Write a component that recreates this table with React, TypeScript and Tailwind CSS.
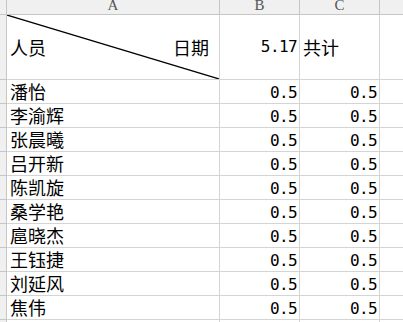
// Spreadsheet: attendance sheet with a diagonal header cell

const names = ["潘怡", "李渝辉", "张晨曦", "吕开新", "陈凯旋", "桑学艳", "扈晓杰", "王钰捷", "刘延风", "焦伟"];

const cjk = { fontFamily: '"Noto Sans CJK SC", sans-serif' };
const mono = { fontFamily: '"DejaVu Sans Mono", monospace' };

export default function App() {
  return (
    <div className="w-[403px] h-[322px] overflow-hidden bg-white text-black">
      {/* Column headers */}
      <div className="flex h-[15px]">
        <div className="w-[7px] shrink-0 bg-[#f0f0f0] border-r border-b border-[#c6c6c6]" />
        <ColHead label="A" width="w-[213px]" />
        <ColHead label="B" width="w-[80px]" />
        <ColHead label="C" width="w-[80px]" />
        <div className="flex-1 bg-[#f0f0f0] border-b border-[#c6c6c6]" />
      </div>

      {/* Title row */}
      <div className="flex h-[65px]">
        <RowHead />
        <div
          className="relative w-[213px] shrink-0 border-r border-b border-[#d4d4d4] flex items-center justify-between pl-[3px] pr-[10px] text-[18px] pt-[1px]"
          style={cjk}
        >
          <svg className="absolute inset-0" width="212" height="64" viewBox="0 0 212 64">
            <line x1="0" y1="0" x2="212" y2="64" stroke="#000" strokeWidth="1.2" />
          </svg>
          <span>人员</span>
          <span>日期</span>
        </div>
        <div
          className="w-[80px] shrink-0 border-r border-b border-[#d4d4d4] flex items-center justify-end pr-[2px] text-[16px] tracking-[-0.6px]"
          style={mono}
        >
          5.17
        </div>
        <div
          className="w-[80px] shrink-0 border-r border-b border-[#d4d4d4] flex items-center pl-[3px] text-[18px] pt-[1px]"
          style={cjk}
        >
          共计
        </div>
        <div className="flex-1 border-b border-[#d4d4d4]" />
      </div>

      {/* Data rows */}
      {names.map((name) => (
        <div key={name} className="flex h-[24px]">
          <RowHead />
          <div
            className="w-[213px] shrink-0 border-r border-b border-[#d4d4d4] flex items-end pl-[3px] text-[18px] leading-[23px]"
            style={cjk}
          >
            {name}
          </div>
          <NumCell value="0.5" />
          <NumCell value="0.5" />
          <div className="flex-1 border-b border-[#d4d4d4]" />
        </div>
      ))}

      <div className="flex h-[10px]">
        <div className="w-[7px] shrink-0 bg-[#f0f0f0] border-r border-[#c6c6c6]" />
        <div className="w-[213px] shrink-0 border-r border-[#d4d4d4]" />
        <div className="w-[80px] shrink-0 border-r border-[#d4d4d4]" />
        <div className="w-[80px] shrink-0 border-r border-[#d4d4d4]" />
      </div>
    </div>
  );
}

function ColHead({ label, width }: { label: string; width: string }) {
  return (
    <div
      className={`${width} shrink-0 bg-[#f0f0f0] border-r border-b border-[#c6c6c6] flex items-start justify-center overflow-hidden text-[15px] leading-[11px] text-[#555]`}
      style={{ fontFamily: '"Liberation Serif", serif' }}
    >
      {label}
    </div>
  );
}

function RowHead() {
  return <div className="w-[7px] shrink-0 bg-[#f0f0f0] border-r border-b border-[#c6c6c6]" />;
}

function NumCell({ value }: { value: string }) {
  return (
    <div
      className="w-[80px] shrink-0 border-r border-b border-[#d4d4d4] flex items-end justify-end pr-[2px] text-[16px] leading-[21px] tracking-[-0.6px]"
      style={mono}
    >
      {value}
    </div>
  );
}
